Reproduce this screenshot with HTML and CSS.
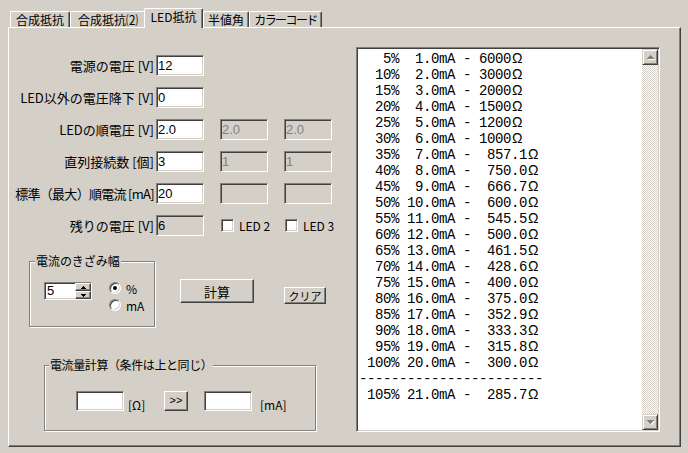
FILE: index.html
```html
<!DOCTYPE html>
<html lang="ja">
<head>
<meta charset="utf-8">
<title>LED抵抗</title>
<link rel="stylesheet" href="styles.css">
</head>
<body>
<div class="window">
  <div class="tabs">
    <div class="tab t1">合成抵抗</div>
    <div class="tab t2">合成抵抗⑵</div>
    <div class="tab t3 active">LED抵抗</div>
    <div class="tab t4">半値角</div>
    <div class="tab t5">カラーコード</div>
  </div>
  <div class="panel">
    <div class="left">
      <div class="form">
        <div class="lbl">電源の電圧 [V]</div><div class="inp">12</div>
        <div class="lbl">LED以外の電圧降下 [V]</div><div class="inp">0</div>
        <div class="lbl">LEDの順電圧 [V]</div><div class="inp">2.0</div><div class="inp dis c4">2.0</div><div class="inp dis c6">2.0</div>
        <div class="lbl">直列接続数 [個]</div><div class="inp">3</div><div class="inp dis c4">1</div><div class="inp dis c6">1</div>
        <div class="lbl tight">標準（最大）順電流 [mA]</div><div class="inp">20</div><div class="inp dis c4"></div><div class="inp dis c6"></div>
        <div class="lbl">残りの電圧 [V]</div><div class="inp ro">6</div>
        <div class="chk c4"><span class="cb"></span>LED 2</div>
        <div class="chk c6"><span class="cb"></span>LED 3</div>
      </div>

      <div class="lower">
        <div class="group g1">
          <span class="gtitle">電流のきざみ幅</span>
          <div class="g1-body">
            <div class="spin">
              <span class="spin-val">5</span>
              <span class="spin-btns">
                <span class="sp"><svg width="5" height="3" viewBox="0 0 5 3" shape-rendering="crispEdges"><path d="M2 0h1v1H2zM1 1h3v1H1zM0 2h5v1H0z" fill="#000"/></svg></span>
                <span class="sp"><svg width="5" height="3" viewBox="0 0 5 3" shape-rendering="crispEdges"><path d="M0 0h5v1H0zM1 1h3v1H1zM2 2h1v1H2z" fill="#000"/></svg></span>
              </span>
            </div>
            <div class="radios">
              <div class="ri"><span class="radio on"></span>%</div>
              <div class="ri"><span class="radio"></span>mA</div>
            </div>
          </div>
        </div>
        <div class="btn calc">計算</div>
        <div class="btn clear">クリア</div>
      </div>

      <div class="group g2">
        <span class="gtitle">電流量計算（条件は上と同じ）</span>
        <div class="g2-body">
          <div class="field"></div>
          <span class="unit u1">[Ω]</span>
          <div class="btn go">&gt;&gt;</div>
          <div class="field f2"></div>
          <span class="unit u2">[mA]</span>
        </div>
      </div>
    </div>

    <div class="listbox">
      <div class="list">   5%  1.0mA - 6000<span class="om">Ω</span>
  10%  2.0mA - 3000<span class="om">Ω</span>
  15%  3.0mA - 2000<span class="om">Ω</span>
  20%  4.0mA - 1500<span class="om">Ω</span>
  25%  5.0mA - 1200<span class="om">Ω</span>
  30%  6.0mA - 1000<span class="om">Ω</span>
  35%  7.0mA -  857.1<span class="om">Ω</span>
  40%  8.0mA -  750.0<span class="om">Ω</span>
  45%  9.0mA -  666.7<span class="om">Ω</span>
  50% 10.0mA -  600.0<span class="om">Ω</span>
  55% 11.0mA -  545.5<span class="om">Ω</span>
  60% 12.0mA -  500.0<span class="om">Ω</span>
  65% 13.0mA -  461.5<span class="om">Ω</span>
  70% 14.0mA -  428.6<span class="om">Ω</span>
  75% 15.0mA -  400.0<span class="om">Ω</span>
  80% 16.0mA -  375.0<span class="om">Ω</span>
  85% 17.0mA -  352.9<span class="om">Ω</span>
  90% 18.0mA -  333.3<span class="om">Ω</span>
  95% 19.0mA -  315.8<span class="om">Ω</span>
 100% 20.0mA -  300.0<span class="om">Ω</span>
-----------------------
 105% 21.0mA -  285.7<span class="om">Ω</span></div>
      <div class="vscroll">
        <div class="sbtn"><svg width="14" height="14" viewBox="0 0 14 14" shape-rendering="crispEdges"><path d="M8 6h1v1H8zM7 7h3v1H7zM6 8h5v1H6zM5 9h7v1H5z" fill="#fff"/><path d="M7 5h1v1H7zM6 6h3v1H6zM5 7h5v1H5zM4 8h7v1H4z" fill="#808080"/></svg></div>
        <div class="track"></div>
        <div class="sbtn"><svg width="14" height="14" viewBox="0 0 14 14" shape-rendering="crispEdges"><path d="M5 6h7v1H5zM6 7h5v1H6zM7 8h3v1H7zM8 9h1v1H8z" fill="#fff"/><path d="M4 5h7v1H4zM5 6h5v1H5zM6 7h3v1H6zM7 8h1v1H7z" fill="#808080"/></svg></div>
      </div>
    </div>
  </div>
</div>
</body>
</html>
```

FILE: styles.css
```css
* { box-sizing: border-box; }

body {
  margin: 0;
  background: #d4d0c8;
  color: #000;
  font-family: "Noto Sans CJK JP", "Liberation Sans", sans-serif;
  font-size: 13px;
}

.window { padding: 8px 0 0 8px; }

/* ---- tabs ---- */
.tabs {
  display: flex;
  align-items: flex-end;
  height: 19px;
  padding-left: 2px;
  font-size: 12px;
}
.tab {
  height: 16px;
  border-top: 1px solid #fff;
  border-left: 1px solid #fff;
  border-right: 1px solid #404040;
  border-top-left-radius: 2px;
  border-top-right-radius: 2px;
  box-shadow: inset -1px 0 #808080;
  text-align: center;
  line-height: 15px;
  white-space: nowrap;
}
.t1 { width: 60px; }
.t2 { width: 76px; }
.t3 { width: 59px; }
.t4 { width: 46px; }
.t5 { width: 73px; letter-spacing: -1.6px; }
.tab.active {
  height: 20px;
  margin: 0 0 -1px -2px;
  position: relative;
  z-index: 1;
  background: #d4d0c8;
}

/* ---- panel ---- */
.panel {
  display: flex;
  width: 673px;
  height: 420px;
  border: 1px solid;
  border-color: #fff #404040 #404040 #fff;
  box-shadow: inset -1px -1px #808080;
}
.left { flex: none; width: 347px; }

.form {
  display: grid;
  grid-template-columns: 147px 48px 16px 48px 16px 48px;
  grid-auto-rows: 21px;
  row-gap: 11px;
  margin-top: 27px;
}
.lbl {
  grid-column: 1;
  display: flex;
  align-items: center;
  justify-content: flex-end;
  padding-right: 2px;
  white-space: nowrap;
}
.lbl.tight { letter-spacing: -0.7px; }
.inp, .field, .spin, .cb, .listbox {
  border: 1px solid;
  border-color: #808080 #fff #fff #808080;
  box-shadow: inset 1px 1px #404040, inset -1px -1px #d4d0c8;
}
.inp {
  grid-column: 2;
  display: flex;
  align-items: center;
  padding-left: 1px;
  background: #fff;
  font-family: "Liberation Sans", sans-serif;
  font-size: 13px;
}
.c4 { grid-column: 4; }
.c6 { grid-column: 6; }
.inp.dis { background: #d4d0c8; color: #808080; }
.inp.ro { background: #d4d0c8; }

.chk {
  display: flex;
  align-items: center;
  gap: 5px;
  padding-left: 1px;
  font-size: 12px;
  white-space: nowrap;
}
.cb {
  flex: none;
  width: 13px;
  height: 13px;
  background: #fff;
}

/* ---- groups ---- */
.lower {
  display: flex;
  align-items: flex-start;
  margin-top: 25px;
}
.group {
  border: 1px solid #808080;
  box-shadow: inset 1px 1px #fff, 1px 1px #fff;
}
.gtitle {
  display: block;
  width: max-content;
  margin: -8px 0 0 5px;
  padding: 0 1px;
  background: #d4d0c8;
  font-size: 12px;
  line-height: 14px;
}
.g1 {
  flex: none;
  width: 126px;
  height: 66px;
  margin-left: 20px;
}
.g1-body {
  display: flex;
  align-items: flex-start;
  margin: 14px 0 0 14px;
}
.spin {
  display: flex;
  width: 48px;
  height: 18px;
  padding: 1px;
  background: #fff;
  font-family: "Liberation Sans", sans-serif;
  font-size: 13px;
}
.spin-val { flex: 1; line-height: 14px; padding-left: 1px; }
.spin-btns {
  width: 16px;
  margin: -1px -1px -1px 0;
  display: flex;
  flex-direction: column;
}
.sp {
  flex: 1;
  display: flex;
  align-items: center;
  justify-content: center;
  background: #d4d0c8;
  border: 1px solid;
  border-color: #fff #404040 #404040 #fff;
  box-shadow: inset -1px -1px #808080;
}
.sp svg { display: block; }

.radios {
  margin-left: 17px;
  display: flex;
  flex-direction: column;
  gap: 5px;
}
.ri {
  display: flex;
  align-items: center;
  gap: 5px;
  height: 12px;
  font-size: 12px;
}
.radio {
  flex: none;
  width: 12px;
  height: 12px;
  border-radius: 50%;
  background: #fff;
  border: 1px solid;
  border-color: #808080 #fff #fff #808080;
  box-shadow: inset 1px 1px #404040, inset -1px -1px #d4d0c8;
  display: flex;
  align-items: center;
  justify-content: center;
}
.radio.on::after {
  content: "";
  width: 4px;
  height: 4px;
  border-radius: 50%;
  background: #000;
}

.btn {
  flex: none;
  display: flex;
  align-items: center;
  justify-content: center;
  background: #d4d0c8;
  border: 1px solid;
  border-color: #fff #404040 #404040 #fff;
  box-shadow: inset -1px -1px #808080;
}
.calc { width: 74px; height: 24px; margin: 18px 0 0 25px; font-size: 13px; }
.clear { width: 42px; height: 17px; margin: 26px 0 0 30px; font-size: 11px; }

.g2 {
  width: 272px;
  height: 66px;
  margin: 38px 0 0 35px;
}
.g2 .gtitle { margin-left: 4px; letter-spacing: -0.4px; }
.g2-body {
  display: flex;
  align-items: flex-start;
  margin: 19px 0 0 31px;
}
.field { flex: none; width: 48px; height: 20px; background: #fff; }
.unit { padding-top: 6px; line-height: 16px; font-size: 12px; white-space: nowrap; }
.u1 { width: 32px; margin-left: 4px; }
.go {
  width: 24px;
  height: 20px;
  margin-left: 4px;
  align-items: flex-start;
  padding-top: 2px;
  font-family: "Liberation Sans", sans-serif;
  font-size: 11px;
}
.f2 { margin-left: 16px; }
.u2 { margin-left: 8px; }

/* ---- list box ---- */
.listbox {
  flex: none;
  display: flex;
  width: 304px;
  height: 385px;
  margin-top: 19px;
  padding: 1px;
  background: #fff;
}
.list {
  flex: 1;
  padding: 2px 0 0 1px;
  font-family: "Liberation Mono", monospace;
  font-size: 14px;
  letter-spacing: -0.4px;
  line-height: 16px;
  white-space: pre;
  overflow: hidden;
}
.om {
  display: inline-block;
  width: 16px;
  padding-left: 1px;
  letter-spacing: 0;
  font-family: "Liberation Sans", sans-serif;
  font-size: 14px;
  line-height: 12px;
}
.vscroll {
  flex: none;
  width: 16px;
  display: flex;
  flex-direction: column;
}
.sbtn {
  height: 16px;
  background: #d4d0c8;
  border: 1px solid;
  border-color: #d4d0c8 #404040 #404040 #d4d0c8;
  box-shadow: inset 1px 1px #fff, inset -1px -1px #808080;
}
.sbtn svg { display: block; }
.track {
  flex: 1;
  background-color: #fff;
  background-image: conic-gradient(#d4d0c8 25%, #fff 0 50%, #d4d0c8 0 75%, #fff 0);
  background-size: 2px 2px;
}
```
